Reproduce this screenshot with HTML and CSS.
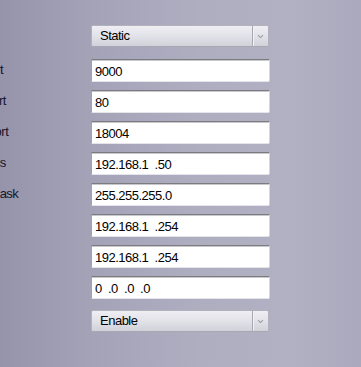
FILE: index.html
```html
<!DOCTYPE html>
<html>
<head>
<meta charset="utf-8">
<link rel="stylesheet" href="styles.css">
</head>
<body>
<div class="form">
  <div class="row row-select">
    <span class="label">Type</span>
    <div class="select"><span class="select-text">Static</span><span class="arrow"><svg width="7" height="5" viewBox="0 0 7 5"><path d="M1 1.2 L3.5 3.6 L6 1.2" fill="none" stroke="#9a9aa2" stroke-width="1.1"/></svg></span></div>
  </div>
  <div class="row row-first"><span class="label">Client Port</span><div class="field">9000</div></div>
  <div class="row"><span class="label">Media Port</span><div class="field">80</div></div>
  <div class="row"><span class="label">Mobile Port</span><div class="field">18004</div></div>
  <div class="row"><span class="label">IP Address</span><div class="field">192.168.1&nbsp; .50</div></div>
  <div class="row"><span class="label">Subnet Mask</span><div class="field">255.255.255.0</div></div>
  <div class="row"><span class="label">Gateway</span><div class="field">192.168.1&nbsp; .254</div></div>
  <div class="row"><span class="label">DNS1</span><div class="field">192.168.1&nbsp; .254</div></div>
  <div class="row"><span class="label">DNS2</span><div class="field">0&nbsp; .0&nbsp; .0&nbsp; .0</div></div>
  <div class="row row-last">
    <span class="label">UPnP</span>
    <div class="select"><span class="select-text">Enable</span><span class="arrow"><svg width="7" height="5" viewBox="0 0 7 5"><path d="M1 1.2 L3.5 3.6 L6 1.2" fill="none" stroke="#9a9aa2" stroke-width="1.1"/></svg></span></div>
  </div>
</div>
</body>
</html>
```
FILE: styles.css
```css
html, body {
  margin: 0;
  padding: 0;
  width: 361px;
  height: 367px;
  overflow: hidden;
}
body {
  background: linear-gradient(to right, #9694aa 0%, #a4a2b7 25%, #afaec1 55%, #b2b1c3 80%, #aba9bd 100%);
  font-family: "Liberation Sans", Arial, sans-serif;
  font-size: 13px;
  letter-spacing: -0.5px;
  color: #000;
}
.form {
  display: flex;
  flex-direction: column;
  margin-left: -52px;
  padding-top: 25px;
}
.row {
  display: flex;
  align-items: center;
  margin-top: 8px;
}
.row-select { margin-top: 0; }
.row-first { margin-top: 12px; }
.row-last { margin-top: 11px; }
.label {
  width: 143px;
  flex: none;
  white-space: nowrap;
  color: #15142a;
  padding-bottom: 3px;
}
.field {
  box-sizing: border-box;
  width: 179px;
  height: 23px;
  background: #fff;
  border-top: 1px solid #7b7b80;
  border-left: 1px solid #a2a2a8;
  border-right: 1px solid #d6d6dc;
  border-bottom: 1px solid #e4e4ea;
  border-radius: 0 0 2px 0;
  box-shadow: inset 0 1px 0 #c9c9cd;
  padding: 3px 0 0 3px;
  line-height: 17px;
  white-space: nowrap;
}
.select {
  box-sizing: border-box;
  width: 178px;
  height: 22px;
  display: flex;
  align-items: stretch;
  border: 1px solid #b3b2bc;
  border-bottom-color: #a9a8b2;
  border-radius: 2px;
  background: linear-gradient(to bottom, #eeeef3 0%, #e2e2e9 50%, #d1d1da 100%);
}
.select-text {
  flex: 1;
  padding-left: 8px;
  line-height: 19px;
}
.arrow {
  width: 15px;
  border-left: 1px solid #a8a8b2;
  box-shadow: inset 1px 0 0 #f2f2f5;
  display: flex;
  align-items: center;
  justify-content: center;
}
```
